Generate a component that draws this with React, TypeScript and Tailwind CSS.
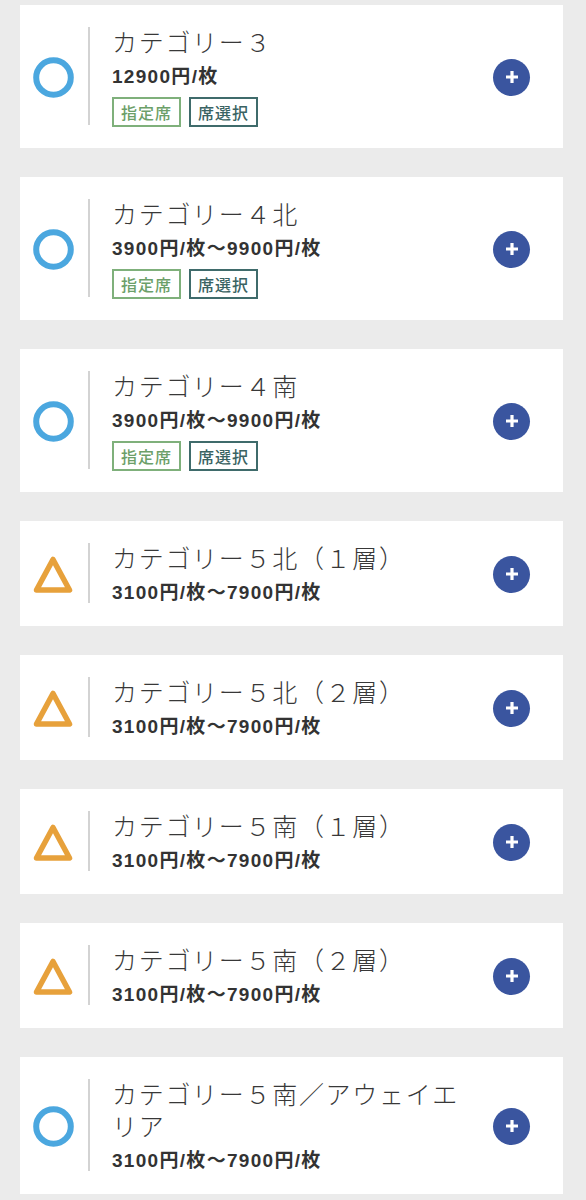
type Mark = "circle" | "triangle";

type Seat = {
  name: string;
  price: string;
  mark: Mark;
  tags?: boolean;
};

const seats: Seat[] = [
  { name: "カテゴリー３", price: "12900円/枚", mark: "circle", tags: true },
  { name: "カテゴリー４北", price: "3900円/枚〜9900円/枚", mark: "circle", tags: true },
  { name: "カテゴリー４南", price: "3900円/枚〜9900円/枚", mark: "circle", tags: true },
  { name: "カテゴリー５北（１層）", price: "3100円/枚〜7900円/枚", mark: "triangle" },
  { name: "カテゴリー５北（２層）", price: "3100円/枚〜7900円/枚", mark: "triangle" },
  { name: "カテゴリー５南（１層）", price: "3100円/枚〜7900円/枚", mark: "triangle" },
  { name: "カテゴリー５南（２層）", price: "3100円/枚〜7900円/枚", mark: "triangle" },
  { name: "カテゴリー５南／アウェイエリア", price: "3100円/枚〜7900円/枚", mark: "circle" },
];

const jp = "font-['Noto_Sans_CJK_JP',sans-serif]";

const MarkIcon = ({ mark }: { mark: Mark }) => {
  if (mark === "circle") {
    return (
      <svg width="41" height="41" viewBox="0 0 41 41" className="shrink-0">
        <circle cx="20.5" cy="20.5" r="17.3" fill="none" stroke="#4ba7df" strokeWidth="6" />
      </svg>
    );
  }
  return (
    <svg width="41" height="41" viewBox="0 0 41 41" className="shrink-0">
      <polygon
        points="20,5.5 36.5,36 3.5,36"
        fill="none"
        stroke="#e7a13b"
        strokeWidth="5.5"
        strokeLinejoin="round"
      />
    </svg>
  );
};

const PlusButton = () => (
  <button className="w-[37px] h-[37px] shrink-0 rounded-full bg-[#3a559f] flex items-center justify-center">
    <svg width="16" height="16" viewBox="0 0 16 16">
      <path d="M8 2v12M2 8h12" stroke="#fff" strokeWidth="3.2" strokeLinecap="butt" />
    </svg>
  </button>
);

const SeatCard = ({ seat }: { seat: Seat }) => {
  return (
    <div className="bg-white flex items-center pl-[13px] pr-[33px] pt-[20px] pb-[19px]">
      <MarkIcon mark={seat.mark} />
      <div className="flex-1 flex items-stretch ml-[14px]">
        <div className="w-[2px] bg-[#d3d3d3] mt-[2px] mb-[4px] shrink-0"></div>
        <div className="flex-1 ml-[22px] mr-[20px]">
          <div className={`${jp} text-[25px] leading-[32px] tracking-[1.7px] font-light text-[#383838]`}>
            {seat.name}
          </div>
          <div className="mt-[6px] font-['Liberation_Sans','Noto_Sans_CJK_JP',sans-serif] font-bold text-[19px] leading-[28px] tracking-[1.3px] text-[#333]">
            {seat.price}
          </div>
          {seat.tags && (
            <div className={`${jp} flex gap-2 mt-[6px] mb-[2px]`}>
              <span className="h-[30px] px-[7px] border-2 border-[#7fb07b] text-[#6c9f69] text-[16px] leading-[26px] tracking-[1px] font-medium">
                指定席
              </span>
              <span className="h-[30px] px-[7px] border-2 border-[#3f6b6b] text-[#3a6363] text-[16px] leading-[26px] tracking-[1px] font-medium">
                席選択
              </span>
            </div>
          )}
        </div>
      </div>
      <PlusButton />
    </div>
  );
};

export default function App() {
  return (
    <div className="min-h-[1200px] bg-[#ebebeb] pt-[5px] pl-[20px] pr-[23px] flex flex-col gap-[29px]">
      {seats.map((s) => (
        <SeatCard key={s.name} seat={s} />
      ))}
    </div>
  );
}
